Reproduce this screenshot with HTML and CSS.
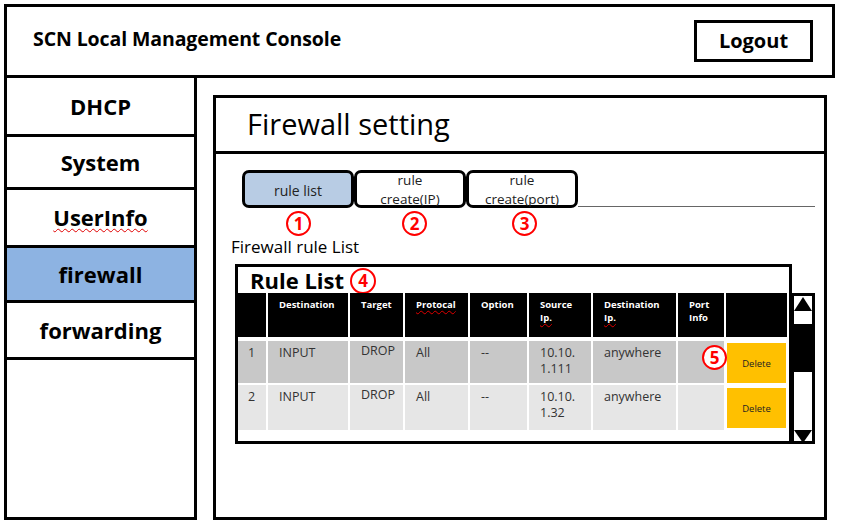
FILE: index.html
```html
<!DOCTYPE html>
<html>
<head>
<meta charset="utf-8">
<title>SCN Local Management Console</title>
<link rel="stylesheet" href="styles.css">
</head>
<body>
<div class="app">
  <header class="topbar">
    <h1 class="brand">SCN Local Management Console</h1>
    <button class="logout">Logout</button>
  </header>
  <div class="main-row">
    <nav class="sidebar">
      <div class="nav-item nav-dhcp">DHCP</div>
      <div class="nav-item nav-system">System</div>
      <div class="nav-item nav-user"><span class="spell">UserInfo</span></div>
      <div class="nav-item nav-fw active">firewall</div>
      <div class="nav-item nav-fwd">forwarding</div>
    </nav>
    <main class="panel">
      <div class="panel-title">Firewall setting</div>
      <div class="panel-body">
        <div class="tabs">
          <div class="tab active"><span class="tab-text">rule list</span><span class="mark mark-tab">1</span></div>
          <div class="tab"><span class="tab-text two">rule<br>create(IP)</span><span class="mark mark-tab">2</span></div>
          <div class="tab"><span class="tab-text two">rule<br>create(port)</span><span class="mark mark-tab">3</span></div>
          <div class="tab-line"></div>
        </div>
        <div class="section-label">Firewall rule List</div>
        <div class="rulebox">
          <div class="rulebox-title">Rule List <span class="mark mark-inline">4</span></div>
          <div class="grid grid-head">
            <div class="hc"></div>
            <div class="hc">Destination</div>
            <div class="hc">Target</div>
            <div class="hc"><span class="spell">Protocal</span></div>
            <div class="hc">Option</div>
            <div class="hc"><div>Source</div><div><span class="spell">Ip.</span></div></div>
            <div class="hc"><div>Destination</div><div><span class="spell">Ip.</span></div></div>
            <div class="hc"><div>Port</div><div>Info</div></div>
            <div class="hc"></div>
          </div>
          <div class="grid grid-body">
            <div class="bc r1 idx">1</div>
            <div class="bc r1">INPUT</div>
            <div class="bc r1 up">DROP</div>
            <div class="bc r1">All</div>
            <div class="bc r1">--</div>
            <div class="bc r1">10.10.<br>1.111</div>
            <div class="bc r1">anywhere</div>
            <div class="bc r1"></div>
            <div class="bc act"><button class="del del1">Delete</button></div>

            <div class="bc r2 idx">2</div>
            <div class="bc r2">INPUT</div>
            <div class="bc r2 up">DROP</div>
            <div class="bc r2">All</div>
            <div class="bc r2">--</div>
            <div class="bc r2">10.10.<br>1.32</div>
            <div class="bc r2">anywhere</div>
            <div class="bc r2"></div>
            <div class="bc act"><button class="del del2">Delete</button></div>
          </div>
          <span class="mark mark-five">5</span>
          <svg class="scrollbar" width="25" height="151" viewBox="0 0 25 151">
            <rect x="0" y="0" width="25" height="151" fill="#000"/>
            <rect x="4" y="3" width="18" height="28" fill="#fff"/>
            <polygon points="13,4 4,18 22,18" fill="#000"/>
            <rect x="4" y="79" width="18" height="69" fill="#fff"/>
            <polygon points="4,137 22,137 13,150" fill="#000"/>
          </svg>
        </div>
      </div>
    </main>
  </div>
</div>
</body>
</html>
```
FILE: styles.css
```css
* { box-sizing: border-box; }

html, body {
  margin: 0;
  padding: 0;
  background: #fff;
}

body {
  padding: 4px 0 0 4px;
  font-family: "Open Sans", "Noto Sans", "Liberation Sans", sans-serif;
  color: #000;
}

.app {
  width: 831px;
}

.topbar {
  height: 74px;
  border: 3px solid #000;
  display: flex;
  align-items: center;
  justify-content: space-between;
  padding: 0 19px 0 26px;
}

.brand {
  margin: 0 0 4px 0;
  font-size: 19.5px;
  font-weight: 700;
  line-height: 24px;
  letter-spacing: -0.1px;
}

.logout {
  width: 119px;
  height: 42px;
  border: 3px solid #000;
  background: #fff;
  font-family: inherit;
  font-size: 20px;
  font-weight: 700;
  color: #000;
  padding: 0 0 2px 0;
  margin-top: 0;
}

.main-row {
  display: flex;
  align-items: flex-start;
}

.sidebar {
  width: 193px;
  height: 442px;
  border-left: 3px solid #000;
  border-right: 3px solid #000;
  border-bottom: 3px solid #000;
  display: flex;
  flex-direction: column;
}

.nav-item {
  border-bottom: 3px solid #000;
  display: flex;
  align-items: center;
  justify-content: center;
  font-size: 22px;
  font-weight: 700;
  padding-bottom: 1px;
}

.nav-dhcp { height: 59px; }
.nav-system { height: 53px; }
.nav-user { height: 58px; }
.nav-fw { height: 55px; }
.nav-fwd { height: 57px; }

.nav-item.active {
  background: #8db3e2;
}

.spell {
  text-decoration: underline wavy #e00000;
  text-decoration-thickness: 1px;
  text-underline-offset: 2px;
}

.panel {
  width: 614px;
  height: 425px;
  margin: 17px 0 0 16px;
  border: 3px solid #000;
}

.panel-title {
  height: 56px;
  border-bottom: 3px solid #000;
  display: flex;
  align-items: center;
  padding-left: 31px;
  font-size: 29px;
  font-weight: 400;
  padding-bottom: 2px;
}

.panel-body {
  padding: 16px 9px 0 15px;
}

.tabs {
  display: flex;
  align-items: flex-end;
  margin-left: 11px;
}

.tab {
  position: relative;
  width: 112px;
  height: 38px;
  border: 3px solid #000;
  border-radius: 7px;
  background: #fff;
  display: flex;
  align-items: center;
  justify-content: center;
  text-align: center;
  color: #222;
}

.tab-text {
  font-size: 14px;
  line-height: 19px;
  padding-top: 2px;
}

.tab-text.two {
  font-size: 13.5px;
  line-height: 19px;
  padding-top: 1px;
}

.tab.active {
  background: #b8cce4;
}

.tab-line {
  flex: 1;
  height: 1px;
  background: #666;
  margin-bottom: 1px;
}

.mark {
  display: flex;
  align-items: center;
  justify-content: center;
  width: 25px;
  height: 25px;
  border: 2px solid #f00;
  border-radius: 50%;
  background: #fff;
  color: #f00;
  font-size: 17px;
  font-weight: 700;
  line-height: 1;
  padding-bottom: 1px;
}

.mark-tab {
  position: absolute;
  top: 38px;
  left: 50%;
  margin-left: -12px;
}

.tab:nth-child(2) .mark-tab { margin-left: -8px; }
.tab:nth-child(3) .mark-tab { margin-left: -10px; }

.section-label {
  margin-top: 29px;
  font-size: 17px;
  line-height: 20px;
  color: #000;
}

.rulebox {
  position: relative;
  width: 557px;
  height: 180px;
  margin: 7px 0 0 4px;
  border: 3px solid #000;
}

.rulebox-title {
  display: flex;
  align-items: center;
  gap: 6px;
  height: 26px;
  padding-left: 12px;
  font-size: 22px;
  font-weight: 700;
  line-height: 26px;
}

.mark-inline {
  width: 26px;
  height: 26px;
  margin-top: 2px;
}

.grid {
  display: grid;
  grid-template-columns: 28px 80px 53px 63px 57px 62px 83px 46px 61px;
  column-gap: 2px;
}

.grid-head {
  height: 44px;
  margin-bottom: 4px;
}

.hc {
  background: #000;
  color: #fff;
  font-size: 9.5px;
  font-weight: 700;
  line-height: 13px;
  padding: 5px 0 0 11px;
}

.grid-body {
  grid-template-rows: 42px 45px;
  row-gap: 2px;
}

.bc {
  font-size: 12.5px;
  line-height: 16px;
  color: #333;
  padding: 4px 0 0 11px;
}

.bc.up { padding-top: 2px; }

.bc.idx {
  padding-left: 0;
  text-align: center;
  padding-right: 1px;
}

.r1 { background: #c8c8c8; }
.r2 { background: #e6e6e6; }

.bc.act {
  padding: 0;
  position: relative;
}

.del {
  position: absolute;
  left: 1px;
  width: 59px;
  border: none;
  background: #ffc000;
  font-family: inherit;
  font-size: 9.5px;
  color: #222;
  padding: 0;
}

.del1 { top: 2px; height: 40px; }
.del2 { top: 3px; height: 40px; }

.mark-five {
  position: absolute;
  left: 464px;
  top: 78px;
}

.scrollbar {
  position: absolute;
  left: 552px;
  top: 26px;
  display: block;
}
```
